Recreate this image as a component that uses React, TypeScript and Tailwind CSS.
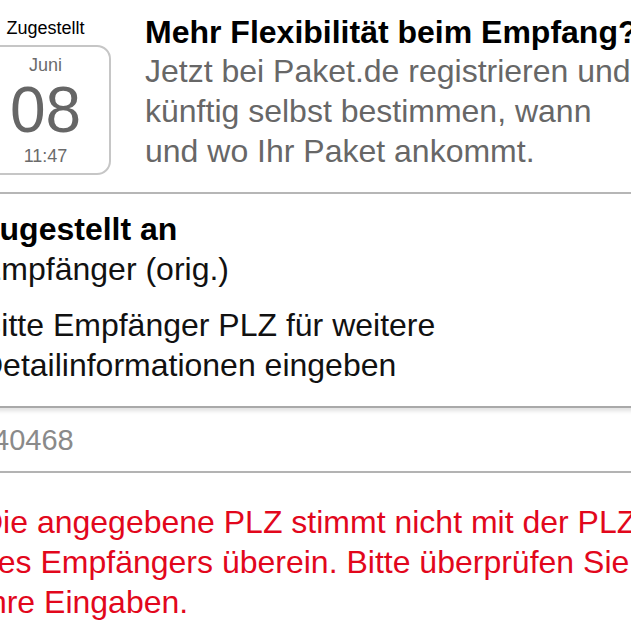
import React from "react";

export default function App() {
  const font = { fontFamily: '"Liberation Sans", Arial, Helvetica, sans-serif' };
  return (
    <div className="w-[631px] h-[631px] overflow-hidden bg-white" style={font}>
      <div className="ml-[-20px] w-[680px]">
        {/* Header */}
        <div className="flex pt-[13px] gap-[34px]">
          <div className="w-[131px] shrink-0 flex flex-col items-center">
            <div className="mt-[4px] text-[18px] leading-[22px] text-black">Zugestellt</div>
            <div className="mt-[6px] w-[131px] h-[130px] border-2 border-[#c6c6c6] rounded-[14px] flex flex-col items-center pt-[7px]">
              <div className="text-[18px] leading-[22px] text-[#6b6b6b]">Juni</div>
              <div className="mt-[2px] text-[64px] leading-[64px] text-[#666666]">08</div>
              <div className="mt-[3px] text-[18px] leading-[22px] text-[#6b6b6b]">11:47</div>
            </div>
          </div>
          <div className="w-[500px] shrink-0">
            <div className="text-[32px] leading-[38px] font-bold text-black whitespace-nowrap">
              Mehr Flexibilität beim Empfang?
            </div>
            <div className="text-[32px] leading-[40px] text-[#676767]">
              Jetzt bei Paket.de registrieren und künftig selbst bestimmen, wann und wo Ihr Paket ankommt.
            </div>
          </div>
        </div>

        {/* Divider */}
        <div className="mt-[17px] h-[2px] bg-[#b6b6b6]" />

        {/* Delivered to */}
        <div className="pt-[15px]">
          <div className="text-[32px] leading-[40px] font-bold text-black">Zugestellt an</div>
          <div className="text-[32px] leading-[40px] text-[#111111]">Empfänger (orig.)</div>
          <div className="mt-[16px] text-[32px] leading-[40px] text-[#111111]">
            Bitte Empfänger PLZ für weitere Detailinformationen eingeben
          </div>
        </div>

        {/* Input */}
        <div className="mt-[21px] border-t-2 border-b-2 border-t-[#a9a9a9] border-b-[#b3b3b3] shadow-[inset_0_3px_4px_rgba(0,0,0,0.12)] pt-[12px] pb-[11px] pl-[13px]">
          <div className="text-[29px] leading-[40px] text-[#8a8a8a]">40468</div>
        </div>

        {/* Error */}
        <div className="mt-[29px] text-[32px] leading-[40px] text-[#e2071c]">
          Die angegebene PLZ stimmt nicht mit der PLZ des Empfängers überein. Bitte überprüfen Sie Ihre Eingaben.
        </div>
      </div>
    </div>
  );
}
